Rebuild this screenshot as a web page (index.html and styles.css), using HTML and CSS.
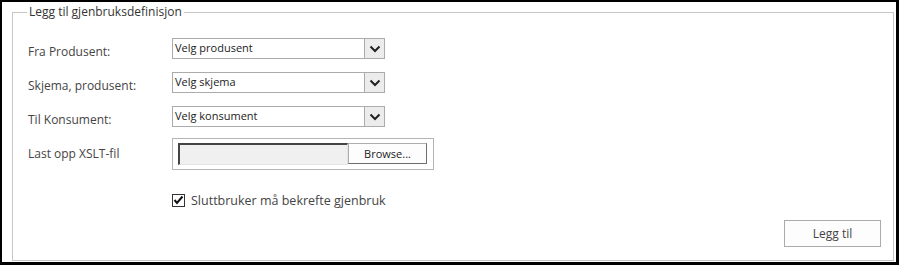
FILE: index.html
```html
<!DOCTYPE html>
<html lang="no">
<head>
    <meta charset="UTF-8">
    <title>Legg til gjenbruksdefinisjon</title>
    <link rel="stylesheet" href="styles.css">
</head>
<body>
    <div class="frame">
        <fieldset class="reuse">
            <legend>Legg til gjenbruksdefinisjon</legend>

            <div class="row">
                <label class="label">Fra Produsent:</label>
                <div class="select">
                    <span class="value">Velg produsent</span>
                    <span class="arrow"><svg width="12" height="8" viewBox="0 0 12 8"><path d="M1.5 1.5 L6 6 L10.5 1.5" fill="none" stroke="#222" stroke-width="2"/></svg></span>
                </div>
            </div>

            <div class="row">
                <label class="label">Skjema, produsent:</label>
                <div class="select">
                    <span class="value">Velg skjema</span>
                    <span class="arrow"><svg width="12" height="8" viewBox="0 0 12 8"><path d="M1.5 1.5 L6 6 L10.5 1.5" fill="none" stroke="#222" stroke-width="2"/></svg></span>
                </div>
            </div>

            <div class="row">
                <label class="label">Til Konsument:</label>
                <div class="select">
                    <span class="value">Velg konsument</span>
                    <span class="arrow"><svg width="12" height="8" viewBox="0 0 12 8"><path d="M1.5 1.5 L6 6 L10.5 1.5" fill="none" stroke="#222" stroke-width="2"/></svg></span>
                </div>
            </div>

            <!-- Opplasting av XSLT -->
            <div class="row upload">
                <label class="label">Last opp XSLT-fil</label>
                <div class="file">
                    <span class="file-field"></span>
                    <span class="browse">Browse...</span>
                </div>
            </div>

            <div class="row check-row">
                <span class="label"></span>
                <label class="check">
                    <span class="box"><svg width="11" height="10" viewBox="0 0 11 10"><path d="M1.5 5 L4 8 L9.5 1.5" fill="none" stroke="#111" stroke-width="2"/></svg></span>
                    Sluttbruker må bekrefte gjenbruk
                </label>
            </div>

            <div class="actions">
                <button class="add">Legg til</button>
            </div>
        </fieldset>
    </div>
</body>
</html>
```

FILE: styles.css
```css
/* Svart ramme rundt hele skjermbildet */
body {
    margin: 0;
    background: #000;
    font-family: "Open Sans", "Noto Sans", sans-serif;
    color: #444;
}

.frame {
    background: #fff;
    width: 894px;
    height: 260px;
    margin: 2px 0 0 2px;
    padding: 1px 2px 0 10px;
    box-sizing: border-box;
}

/* Feltsett med tittel */
.reuse {
    margin: 0;
    border: 1px solid #c6c6c6;
    padding: 17px 15px 0 15px;
    height: 258px;
    box-sizing: border-box;
}

.reuse legend {
    font-size: 12px;
    color: #333;
    padding: 0 2px;
    margin-left: -1px;
    line-height: 18px;
}

.row {
    display: flex;
    align-items: center;
    height: 21px;
    margin-bottom: 13px;
}

.label {
    width: 144px;
    font-size: 12px;
    padding-top: 6px;
}

/* Nedtrekkslister */
.select {
    display: flex;
    width: 213px;
    height: 21px;
    border: 1px solid #ababab;
    box-sizing: border-box;
}

.select .value {
    flex: 1;
    font-size: 11px;
    color: #222;
    line-height: 17px;
    padding-left: 2px;
}

.select .arrow {
    width: 19px;
    border-left: 1px solid #ababab;
    background: #ececec;
    display: flex;
    align-items: center;
    justify-content: center;
}

/* Filopplasting */
.upload {
    height: 31px;
    margin-top: -2px;
    margin-bottom: 24px;
    align-items: flex-start;
}

.upload .label {
    padding-top: 7px;
}

.file {
    display: flex;
    width: 262px;
    height: 32px;
    border: 1px solid #b5b5b5;
    box-sizing: border-box;
    padding: 4px 5px;
}

.file-field {
    width: 170px;
    height: 22px;
    box-sizing: border-box;
    background: #f0f0f0;
    border-top: 2px solid #444;
    border-left: 2px solid #444;
    border-right: 1px solid #e3e3e3;
    border-bottom: 1px solid #e3e3e3;
}

.browse {
    width: 79px;
    height: 21px;
    box-sizing: border-box;
    border: 1px solid #adadad;
    border-right-color: #6d6d6d;
    border-bottom-color: #6d6d6d;
    background: #fdfdfd;
    font-size: 11px;
    color: #222;
    text-align: center;
    line-height: 19px;
}

/* Avkrysningsboks */
.check-row {
    height: 14px;
}

.check-row .label {
    padding: 0;
}

.check {
    display: flex;
    align-items: center;
    font-size: 12.5px;
    color: #444;
}

.box {
    width: 13px;
    height: 13px;
    box-sizing: border-box;
    border: 1px solid #333;
    margin-right: 6px;
    display: flex;
    align-items: center;
    justify-content: center;
}

/* Knapp */
.actions {
    display: flex;
    justify-content: flex-end;
    margin-right: -3px;
    margin-top: 1px;
}

.add {
    width: 97px;
    height: 27px;
    border: 1px solid #ababab;
    background: #fdfdfd;
    font-family: inherit;
    font-size: 12px;
    color: #444;
}
```
